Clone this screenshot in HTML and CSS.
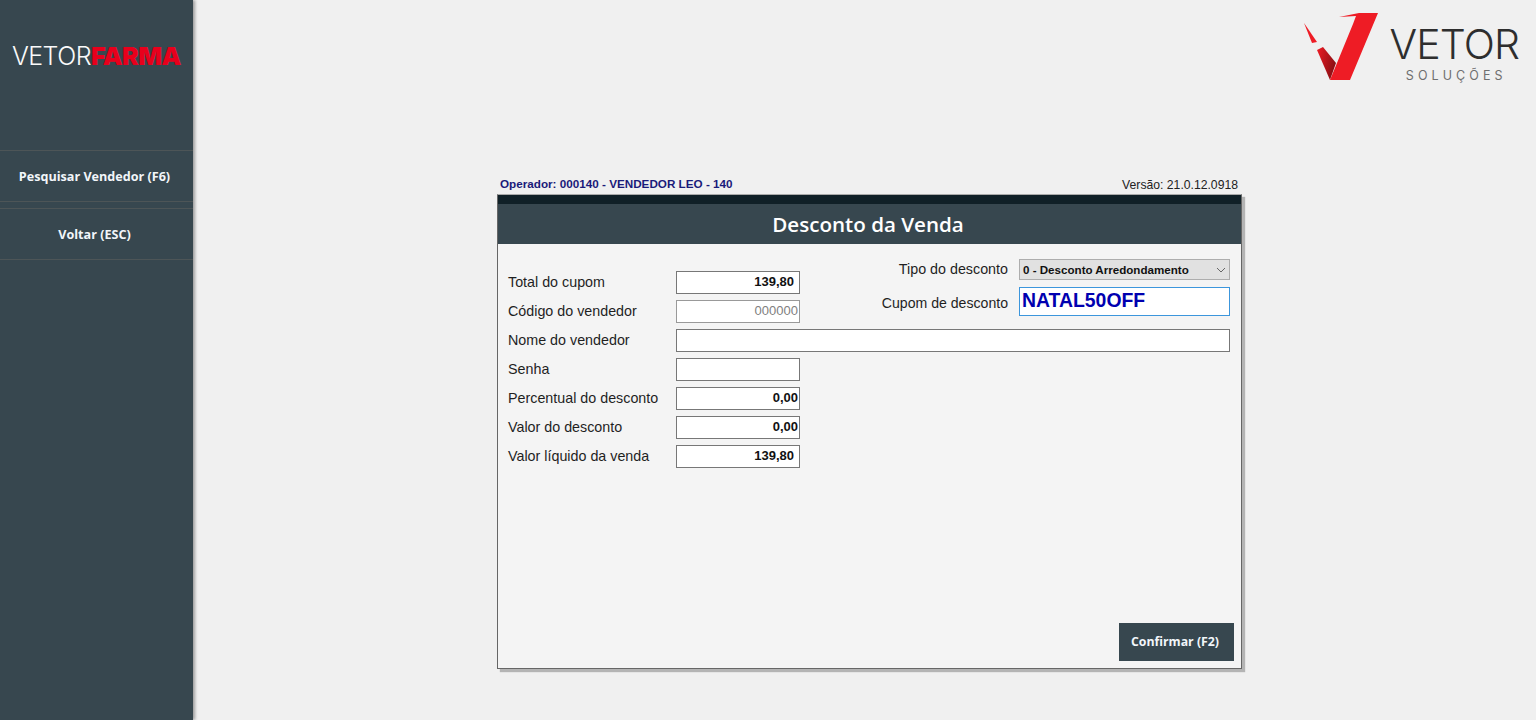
FILE: index.html
```html
<!DOCTYPE html>
<html lang="pt-BR">
<head>
<meta charset="utf-8">
<title>Desconto da Venda</title>
<link rel="stylesheet" href="styles.css">
</head>
<body>
<div class="app">
  <aside class="sidebar">
    <div class="brand"><span class="brand-thin">VETOR</span><span class="brand-bold">FARMA</span></div>
    <nav class="menu">
      <a class="menu-item">Pesquisar Vendedor (F6)</a>
      <a class="menu-item">Voltar (ESC)</a>
    </nav>
  </aside>
  <main class="content">
    <header class="topbar">
      <div class="logo">
        <svg class="logo-mark" width="76" height="72" viewBox="0 0 76 72">
          <defs>
            <linearGradient id="fold" x1="0" y1="0" x2="1" y2="0.4">
              <stop offset="0" stop-color="#ee1c25"/>
              <stop offset="1" stop-color="#8c0f14"/>
            </linearGradient>
          </defs>
          <polygon points="1,12 14,31 9,32" fill="#ee1c25"/>
          <polygon points="14,39 20,36 33,52 27,69" fill="url(#fold)"/>
          <polygon points="56,2 75,2 47,69 27,69 50,13 53,5 36,6" fill="#ee1c25"/>
        </svg>
        <div class="logo-text">
          <div class="logo-name">VETOR</div>
          <div class="logo-sub">SOLUÇÕES</div>
        </div>
      </div>
    </header>
    <section class="window">
      <div class="window-meta">
        <span class="operator">Operador: 000140 - VENDEDOR LEO - 140</span>
        <span class="version">Versão: 21.0.12.0918</span>
      </div>
      <div class="dialog">
        <div class="dialog-strip"></div>
        <h1 class="dialog-title">Desconto da Venda</h1>
        <div class="dialog-body">
          <div class="form-top">
            <div class="form-left">
              <div class="row"><label class="label">Total do cupom</label><input class="field bold inset" value="139,80" readonly></div>
              <div class="row"><label class="label">Código do vendedor</label><input class="field muted" value="000000" readonly></div>
            </div>
            <div class="form-right">
              <div class="row-right">
                <label class="label-right">Tipo do desconto</label>
                <div class="select"><span>0 - Desconto Arredondamento</span>
                  <svg class="chevron" width="10" height="6" viewBox="0 0 10 6"><path d="M1 1l4 4 4-4" fill="none" stroke="#666" stroke-width="1"/></svg>
                </div>
              </div>
              <div class="row-right">
                <label class="label-right">Cupom de desconto</label>
                <input class="coupon" value="NATAL50OFF" readonly>
              </div>
            </div>
          </div>
          <div class="row"><label class="label">Nome do vendedor</label><input class="field wide" readonly></div>
          <div class="row"><label class="label">Senha</label><input class="field" readonly></div>
          <div class="row"><label class="label">Percentual do desconto</label><input class="field bold" value="0,00" readonly></div>
          <div class="row"><label class="label">Valor do desconto</label><input class="field bold" value="0,00" readonly></div>
          <div class="row"><label class="label">Valor líquido da venda</label><input class="field bold inset" value="139,80" readonly></div>
          <div class="actions"><button class="confirm">Confirmar (F2)</button></div>
        </div>
      </div>
    </section>
  </main>
</div>
</body>
</html>
```
FILE: styles.css
```css
* { box-sizing: border-box; }
html, body { margin: 0; height: 100%; overflow: hidden; }
body { background: #f0f0f0; font-family: "Liberation Sans", Arial, sans-serif; color: #222; }
.app { display: flex; height: 720px; }

.sidebar {
  width: 193px; flex: none; background: #37474f;
  box-shadow: 2px 0 3px rgba(0,0,0,.35);
}
.brand {
  height: 150px; padding: 41px 0 0 12px; font-family: Inter, sans-serif;
  font-size: 25px; line-height: 30px; white-space: nowrap;
}
.brand-thin { color: #fafafa; font-weight: 300; letter-spacing: -.55px; }
.brand-bold { color: #e8001c; font-weight: 900; letter-spacing: -.55px; }
.menu { display: flex; flex-direction: column; gap: 6px; }
.menu-item {
  display: flex; align-items: center; justify-content: center;
  height: 52px; padding-right: 4px; border-top: 1px solid #4d5557; border-bottom: 1px solid #4d5557;
  color: #f2f6fa; font-family: "Open Sans", sans-serif; font-weight: 700; font-size: 12.6px;
}

.content { flex: 1; display: flex; flex-direction: column; min-width: 0; }
.topbar { height: 177px; display: flex; justify-content: flex-end; padding: 11px 17px 0 0; }
.logo { display: flex; height: 72px; gap: 11px; }
.logo-text { display: flex; flex-direction: column; align-items: center; padding-top: 10px; }
.logo-name { font-family: Inter, sans-serif; font-weight: 300; font-size: 41px; line-height: 46px; color: #2e2e2e; letter-spacing: -.9px; }
.logo-sub { font-family: Inter, sans-serif; font-size: 12.5px; line-height: 14px; margin-top: 2px; padding-left: 4px; color: #6f6f6f; letter-spacing: 4.1px; }

.window { width: 745px; margin-left: 304px; }
.window-meta { display: flex; justify-content: space-between; height: 17px; padding: 0 4px 0 3px; font-size: 11.7px; line-height: 14px; }
.operator { color: #1a1a7a; font-weight: 700; }
.version { color: #222; padding-top: 1px; font-size: 12.2px; line-height: 15px; }

.dialog {
  height: 475px; background: #f4f4f4; border: 1px solid #666; border-top-color: #aaa;
  box-shadow: 3px 3px 1px rgba(0,0,0,.25); display: flex; flex-direction: column;
}
.dialog-strip { height: 9px; background: #102027; flex: none; }
.dialog-title {
  margin: 0; height: 40px; flex: none; padding-right: 3px; background: #37474f; color: #fff; text-align: center;
  font-family: "Open Sans", sans-serif; font-weight: 600; font-size: 20.6px; line-height: 41px;
}
.dialog-body { flex: 1; display: flex; flex-direction: column; gap: 6px; padding: 15px 11px 7px 10px; }

.form-top { display: flex; justify-content: space-between; }
.form-left { display: flex; flex-direction: column; gap: 6px; padding-top: 12px; }
.form-right { display: flex; flex-direction: column; gap: 7px; }
.row { display: flex; align-items: center; height: 23px; }
.row-right { display: flex; align-items: center; justify-content: flex-end; gap: 11px; }
.label { width: 168px; flex: none; font-size: 14.3px; padding-bottom: 2px; color: #1f1f1f; }
.label-right { font-size: 14.3px; color: #1f1f1f; }
.row-right:first-child .label-right { padding-bottom: 2px; }
.row-right:last-child .label-right { padding-top: 2px; font-size: 14.1px; }

.field {
  width: 124px; height: 23px; padding: 0 1px 2px; border: 1px solid #777; background: #fff; outline: none;
  font-family: "Liberation Sans", Arial, sans-serif; font-size: 13px; text-align: right; color: #111; border-radius: 0;
}
.field.wide { width: 554px; }
.field.bold { font-weight: 700; }
.field.inset { padding-right: 5px; padding-bottom: 3px; }
.field.muted { color: #808080; border-color: #999; }

.select {
  width: 211px; height: 21px; padding: 0 3px 1px 3px; display: flex; align-items: center; justify-content: space-between;
  background: #e1e1e1; border: 1px solid #adadad; font-size: 11.6px; font-weight: 700; color: #111;
}
.chevron { margin-top: 2px; }
.coupon {
  width: 211px; height: 29px; padding: 0 2px 2px; border: 1px solid #3c96dc; background: #fff; outline: none;
  font-family: "Liberation Sans", Arial, sans-serif; font-size: 19.4px; font-weight: 700; color: #0000b0; border-radius: 0;
}

.actions { margin-top: auto; display: flex; justify-content: flex-end; margin-right: -4px; }
.confirm {
  width: 115px; height: 38px; border: 0; background: #37474f; color: #f2f6fa; padding: 0 3px 2px 0;
  font-family: "Open Sans", sans-serif; font-weight: 700; font-size: 12.3px;
}
```
